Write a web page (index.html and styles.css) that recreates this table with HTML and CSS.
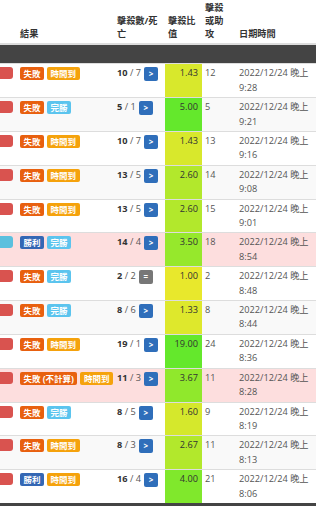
FILE: index.html
```html
<!DOCTYPE html>
<html lang="zh-Hant">
<head>
<meta charset="utf-8">
<title>Matches</title>
<link rel="stylesheet" href="styles.css">
</head>
<body>
<table class="matches">
  <colgroup>
    <col class="c-mark"><col class="c-result"><col class="c-kd"><col class="c-ratio"><col class="c-assist"><col class="c-date">
  </colgroup>
  <thead>
    <tr>
      <th></th>
      <th>結果</th>
      <th>擊殺數/死亡</th>
      <th>擊殺比值</th>
      <th class="th-assist">擊殺或助攻</th>
      <th>日期時間</th>
    </tr>
    <tr class="sep"><td colspan="6"></td></tr>
  </thead>
  <tbody>
    <tr class="odd">
      <td class="mark"><span class="box box-red"></span></td>
      <td><div class="badges"><span class="badge b-loss">失敗</span><span class="badge b-time">時間到</span></div></td>
      <td><div class="kd"><span><b>10</b> / 7</span><span class="btn">&gt;</span></div></td>
      <td class="ratio" style="background:hsl(65,80%,54%)">1.43</td>
      <td class="assist">12</td>
      <td class="date">2022/12/24 晚上 9:28</td>
    </tr>
    <tr class="even">
      <td class="mark"><span class="box box-red"></span></td>
      <td><div class="badges"><span class="badge b-loss">失敗</span><span class="badge b-sweep">完勝</span></div></td>
      <td><div class="kd"><span><b>5</b> / 1</span><span class="btn">&gt;</span></div></td>
      <td class="ratio" style="background:hsl(102,80%,54%)">5.00</td>
      <td class="assist">5</td>
      <td class="date">2022/12/24 晚上 9:21</td>
    </tr>
    <tr class="odd">
      <td class="mark"><span class="box box-red"></span></td>
      <td><div class="badges"><span class="badge b-loss">失敗</span><span class="badge b-time">時間到</span></div></td>
      <td><div class="kd"><span><b>10</b> / 7</span><span class="btn">&gt;</span></div></td>
      <td class="ratio" style="background:hsl(65,80%,54%)">1.43</td>
      <td class="assist">13</td>
      <td class="date">2022/12/24 晚上 9:16</td>
    </tr>
    <tr class="even">
      <td class="mark"><span class="box box-red"></span></td>
      <td><div class="badges"><span class="badge b-loss">失敗</span><span class="badge b-time">時間到</span></div></td>
      <td><div class="kd"><span><b>13</b> / 5</span><span class="btn">&gt;</span></div></td>
      <td class="ratio" style="background:hsl(77,80%,54%)">2.60</td>
      <td class="assist">14</td>
      <td class="date">2022/12/24 晚上 9:08</td>
    </tr>
    <tr class="odd">
      <td class="mark"><span class="box box-red"></span></td>
      <td><div class="badges"><span class="badge b-loss">失敗</span><span class="badge b-time">時間到</span></div></td>
      <td><div class="kd"><span><b>13</b> / 5</span><span class="btn">&gt;</span></div></td>
      <td class="ratio" style="background:hsl(77,80%,54%)">2.60</td>
      <td class="assist">15</td>
      <td class="date">2022/12/24 晚上 9:01</td>
    </tr>
    <tr class="pink">
      <td class="mark"><span class="box box-blue"></span></td>
      <td><div class="badges"><span class="badge b-win">勝利</span><span class="badge b-sweep">完勝</span></div></td>
      <td><div class="kd"><span><b>14</b> / 4</span><span class="btn">&gt;</span></div></td>
      <td class="ratio" style="background:hsl(86,80%,54%)">3.50</td>
      <td class="assist">18</td>
      <td class="date">2022/12/24 晚上 8:54</td>
    </tr>
    <tr class="odd">
      <td class="mark"><span class="box box-red"></span></td>
      <td><div class="badges"><span class="badge b-loss">失敗</span><span class="badge b-sweep">完勝</span></div></td>
      <td><div class="kd"><span><b>2</b> / 2</span><span class="btn btn-gray">=</span></div></td>
      <td class="ratio" style="background:hsl(60,80%,54%)">1.00</td>
      <td class="assist">2</td>
      <td class="date">2022/12/24 晚上 8:48</td>
    </tr>
    <tr class="even">
      <td class="mark"><span class="box box-red"></span></td>
      <td><div class="badges"><span class="badge b-loss">失敗</span><span class="badge b-sweep">完勝</span></div></td>
      <td><div class="kd"><span><b>8</b> / 6</span><span class="btn">&gt;</span></div></td>
      <td class="ratio" style="background:hsl(63,80%,54%)">1.33</td>
      <td class="assist">8</td>
      <td class="date">2022/12/24 晚上 8:44</td>
    </tr>
    <tr class="odd">
      <td class="mark"><span class="box box-red"></span></td>
      <td><div class="badges"><span class="badge b-loss">失敗</span><span class="badge b-time">時間到</span></div></td>
      <td><div class="kd"><span><b>19</b> / 1</span><span class="btn">&gt;</span></div></td>
      <td class="ratio" style="background:hsl(102,80%,54%)">19.00</td>
      <td class="assist">24</td>
      <td class="date">2022/12/24 晚上 8:36</td>
    </tr>
    <tr class="pink">
      <td class="mark"><span class="box box-red"></span></td>
      <td><div class="badges"><span class="badge b-loss">失敗 (不計算)</span><span class="badge b-time">時間到</span></div></td>
      <td><div class="kd"><span><b>11</b> / 3</span><span class="btn">&gt;</span></div></td>
      <td class="ratio" style="background:hsl(88,80%,54%)">3.67</td>
      <td class="assist">11</td>
      <td class="date">2022/12/24 晚上 8:28</td>
    </tr>
    <tr class="odd">
      <td class="mark"><span class="box box-red"></span></td>
      <td><div class="badges"><span class="badge b-loss">失敗</span><span class="badge b-sweep">完勝</span></div></td>
      <td><div class="kd"><span><b>8</b> / 5</span><span class="btn">&gt;</span></div></td>
      <td class="ratio" style="background:hsl(66,80%,54%)">1.60</td>
      <td class="assist">9</td>
      <td class="date">2022/12/24 晚上 8:19</td>
    </tr>
    <tr class="even">
      <td class="mark"><span class="box box-red"></span></td>
      <td><div class="badges"><span class="badge b-loss">失敗</span><span class="badge b-time">時間到</span></div></td>
      <td><div class="kd"><span><b>8</b> / 3</span><span class="btn">&gt;</span></div></td>
      <td class="ratio" style="background:hsl(77,80%,54%)">2.67</td>
      <td class="assist">11</td>
      <td class="date">2022/12/24 晚上 8:13</td>
    </tr>
    <tr class="odd">
      <td class="mark"><span class="box box-red"></span></td>
      <td><div class="badges"><span class="badge b-win">勝利</span><span class="badge b-time">時間到</span></div></td>
      <td><div class="kd"><span><b>16</b> / 4</span><span class="btn">&gt;</span></div></td>
      <td class="ratio" style="background:hsl(93,80%,54%)">4.00</td>
      <td class="assist">21</td>
      <td class="date">2022/12/24 晚上 8:06</td>
    </tr>
  </tbody>
  <tfoot>
    <tr class="sep"><td colspan="6"></td></tr>
  </tfoot>
</table>
</body>
</html>
```

FILE: styles.css
```css
html, body {
  margin: 0;
  padding: 0;
  background: #fff;
  overflow: hidden;
}

body {
  font-family: "Open Sans", "Noto Sans CJK TC", sans-serif;
  font-size: 9.2px;
  color: #333;
}

.matches {
  width: 316px;
  table-layout: fixed;
  border-collapse: collapse;
  border-spacing: 0;
}

.c-mark { width: 17px; }
.c-result { width: 97px; }
.c-kd { width: 51px; }
.c-ratio { width: 37px; }
.c-assist { width: 34px; }
.c-date { width: 80px; }

.matches th {
  text-align: left;
  vertical-align: bottom;
  font-weight: bold;
  line-height: 12.8px;
  padding: 2px 3px 3px;
  border-bottom: 2px solid #ddd;
  color: #333;
}

.matches th.th-assist {
  padding-right: 6px;
}

.matches .sep td {
  height: 18px;
  padding: 0;
  background: #444;
}

.matches tbody td {
  vertical-align: top;
  line-height: 14.4px;
  padding: 2px 3px;
  border-top: 1px solid #ddd;
}

.matches tbody tr.odd { background: #fff; }
.matches tbody tr.even { background: #f9f9f9; }
.matches tbody tr.pink { background: #fddede; }

.matches tbody td.mark {
  padding-left: 0;
  padding-right: 0;
}

.box {
  display: block;
  width: 13px;
  height: 12px;
  margin-top: 1px;
  border-radius: 0 3px 3px 0;
}

.box-red { background: #d9534f; }
.box-blue { background: #5bc0de; }

.badges {
  display: flex;
  gap: 3px;
  padding-top: 1px;
  white-space: nowrap;
}

.badge {
  display: inline-block;
  height: 13px;
  line-height: 13px;
  padding: 0 3.5px;
  border-radius: 2px;
  font-size: 8.5px;
  font-weight: bold;
  color: #fff;
}

.b-loss { background: #e8600f; }
.b-time { background: #f5a20c; }
.b-sweep { background: #5bc4ee; }
.b-win { background: #3467b4; }

.kd {
  display: flex;
  align-items: flex-start;
  gap: 3px;
  color: #555;
  white-space: nowrap;
}

.kd b {
  color: #333;
}

.btn {
  display: inline-block;
  width: 14px;
  height: 14px;
  margin-top: 1px;
  line-height: 13px;
  text-align: center;
  border-radius: 2px;
  background: #2f6eba;
  color: #fff;
  font-size: 8px;
  font-weight: bold;
}

.btn-gray { background: #777; }

.matches tbody td.ratio {
  text-align: right;
  padding-right: 4px;
  color: #333;
}

.assist,
.date {
  color: #555;
}
```
